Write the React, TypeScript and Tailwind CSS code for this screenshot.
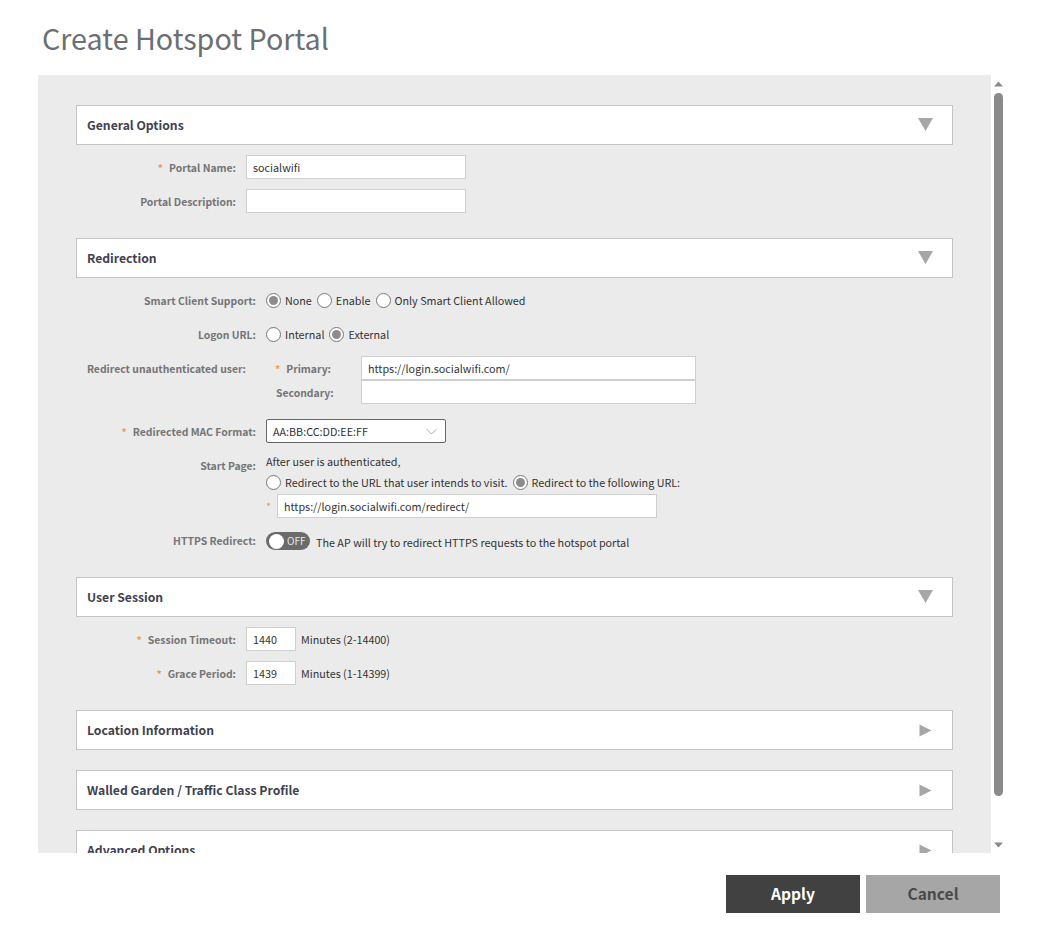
const FONT = "font-['Noto_Sans_CJK_SC','Noto_Sans',sans-serif]";

function Section({ title, open }: { title: string; open?: boolean }) {
  return (
    <div className="flex h-10 shrink-0 items-center justify-between border border-[#c4c4c4] bg-white pl-[10px] pr-[19px]">
      <span className="text-[12.2px] font-bold text-[#3f4150]">{title}</span>
      {open ? (
        <svg width="15" height="13" viewBox="0 0 15 13" className="mb-[1px] fill-[#a6a6a6]">
          <path d="M0 0H15L7.5 13Z" />
        </svg>
      ) : (
        <svg width="13" height="13" viewBox="0 0 13 13" className="mr-[1px] fill-[#a6a6a6]">
          <path d="M0.5 0.5L12.5 6.5L0.5 12.5Z" />
        </svg>
      )}
    </div>
  );
}

function Star() {
  return <span className="mr-[6px] text-[#ee9b3e]">*</span>;
}

function Label({ w, star, children, className = "pt-[2px]" }: { w: string; star?: boolean; children: string; className?: string }) {
  return (
    <div className={`${w} shrink-0 whitespace-nowrap text-right text-[10.4px] font-bold leading-none text-[#757575] ${className}`}>
      {star && <Star />}
      {children}
    </div>
  );
}

function TextBox({ value, className }: { value?: string; className: string }) {
  return (
    <div className={`flex items-center border border-[#cfcfcf] bg-white pl-[6px] text-[10.78px] text-[#333] ${className}`}>
      {value}
    </div>
  );
}

function Radio({ on, label }: { on?: boolean; label: string }) {
  return (
    <span className="flex items-center gap-[4px] text-[10.78px] text-[#333]">
      <span className="flex h-[15px] w-[15px] shrink-0 items-center justify-center rounded-full border border-[#777] bg-white">
        {on && <span className="h-[9px] w-[9px] rounded-full bg-[#8c8c8c]" />}
      </span>
      {label}
    </span>
  );
}

export default function App() {
  return (
    <div className={`h-[942px] w-[1045px] overflow-hidden bg-white ${FONT}`}>
      <h1 className="h-[75px] pl-[42px] pt-[18px] text-[28.7px] font-normal leading-[40px] text-[#6b6f73]">
        Create Hotspot Portal
      </h1>

      <div className="flex h-[778px]">
        <div className="ml-[38px] h-full w-[953px] overflow-hidden bg-[#ebebeb] pl-[38px] pr-[38px] pt-[30px]">
          <Section title="General Options" open />
          <div className="mt-[10px] flex h-6 items-center">
            <Label w="w-[160px]" star>Portal Name:</Label>
            <TextBox value="socialwifi" className="ml-[10px] h-6 w-[220px]" />
          </div>
          <div className="mt-[10px] flex h-6 items-center">
            <Label w="w-[160px]">Portal Description:</Label>
            <TextBox className="ml-[10px] h-6 w-[220px]" />
          </div>

          <div className="mt-[25px]">
            <Section title="Redirection" open />
          </div>
          <div className="mt-[14px] flex h-4 items-center">
            <Label w="w-[180px]">Smart Client Support:</Label>
            <div className="ml-[10px] flex gap-[5px]">
              <Radio on label="None" />
              <Radio label="Enable" />
              <Radio label="Only Smart Client Allowed" />
            </div>
          </div>
          <div className="mt-[18px] flex h-4 items-center">
            <Label w="w-[180px]">Logon URL:</Label>
            <div className="ml-[10px] flex gap-[5px]">
              <Radio label="Internal" />
              <Radio on label="External" />
            </div>
          </div>
          <div className="mt-[14px] flex h-6 items-center">
            <Label w="w-[170px]">Redirect unauthenticated user:</Label>
            <Label w="w-[85px]" star>Primary:</Label>
            <TextBox value="https://login.socialwifi.com/" className="ml-[30px] h-6 w-[335px]" />
          </div>
          <div className="flex h-6 items-center">
            <div className="w-[200px] shrink-0" />
            <div className="w-[59px] shrink-0 pt-[2px] text-[10.4px] font-bold leading-none text-[#757575]">Secondary:</div>
            <TextBox className="ml-[26px] h-6 w-[335px]" />
          </div>
          <div className="mt-[15px] flex h-6 items-center">
            <Label w="w-[180px]" star>Redirected MAC Format:</Label>
            <div className="ml-[10px] flex h-6 w-[180px] items-center justify-between rounded-[2px] border border-[#666] bg-white pl-[6px] pr-[8px] text-[10.78px] text-[#333]">
              AA:BB:CC:DD:EE:FF
              <svg width="11" height="7" viewBox="0 0 11 7" fill="none" stroke="#aaa" strokeWidth="1">
                <path d="M0.5 1L5.5 6L10.5 1" />
              </svg>
            </div>
          </div>
          <div className="mt-[10px] flex">
            <Label w="w-[180px]" className="pt-[8px]">Start Page:</Label>
            <div className="ml-[10px]">
              <div className="h-4 text-[10.78px] leading-4 text-[#333]">After user is authenticated,</div>
              <div className="mt-[5px] flex gap-[5px]">
                <Radio label="Redirect to the URL that user intends to visit." />
                <Radio on label="Redirect to the following URL:" />
              </div>
              <div className="mt-[4px] flex items-center">
                <span className="w-[11px] text-[10.78px] leading-none text-[#ee9b3e]">*</span>
                <TextBox value="https://login.socialwifi.com/redirect/" className="h-6 w-[380px]" />
              </div>
            </div>
          </div>
          <div className="mt-[13px] flex h-5 items-center">
            <Label w="w-[180px]" className="pt-0">HTTPS Redirect:</Label>
            <div className="ml-[10px] flex h-[18px] w-[44px] items-center rounded-full bg-[#6b6b6b] pl-[3px]">
              <span className="h-[15px] w-[15px] rounded-full bg-white" />
              <span className="ml-[3px] text-[10px] leading-none text-[#e8e8e8]">OFF</span>
            </div>
            <span className="ml-[6px] pt-[2px] text-[10.78px] text-[#333]">The AP will try to redirect HTTPS requests to the hotspot portal</span>
          </div>

          <div className="mt-[26px]">
            <Section title="User Session" open />
          </div>
          <div className="mt-[10px] flex h-6 items-center">
            <Label w="w-[160px]" star>Session Timeout:</Label>
            <TextBox value="1440" className="ml-[10px] h-6 w-[50px]" />
            <span className="ml-[5px] text-[10.78px] text-[#333]">Minutes (2-14400)</span>
          </div>
          <div className="mt-[10px] flex h-6 items-center">
            <Label w="w-[160px]" star>Grace Period:</Label>
            <TextBox value="1439" className="ml-[10px] h-6 w-[50px]" />
            <span className="ml-[5px] text-[10.78px] text-[#333]">Minutes (1-14399)</span>
          </div>

          <div className="mt-[25px] flex flex-col gap-5">
            <Section title="Location Information" />
            <Section title="Walled Garden / Traffic Class Profile" />
            <Section title="Advanced Options" />
          </div>
        </div>

        <div className="ml-[3px] flex h-full w-[9px] flex-col items-center">
          <svg width="9" height="6" viewBox="0 0 9 6" className="mt-[6px] fill-[#8a8a8a]">
            <path d="M4.5 0.5L9 5.5H0Z" />
          </svg>
          <div className="mt-[6px] h-[703px] w-[9px] rounded-full bg-[#8a8a8a]" />
          <svg width="9" height="6" viewBox="0 0 9 6" className="mt-[46px] fill-[#8a8a8a]">
            <path d="M0 0.5H9L4.5 5.5Z" />
          </svg>
        </div>
      </div>

      <div className="mt-[22px] flex justify-end gap-[6px] pr-[45px]">
        <button className="h-[38px] w-[134px] bg-[#414141] text-[15.6px] font-bold text-white">Apply</button>
        <button className="h-[38px] w-[134px] bg-[#a6a6a6] text-[15.6px] font-bold text-[#4a4a4a]">Cancel</button>
      </div>
    </div>
  );
}
